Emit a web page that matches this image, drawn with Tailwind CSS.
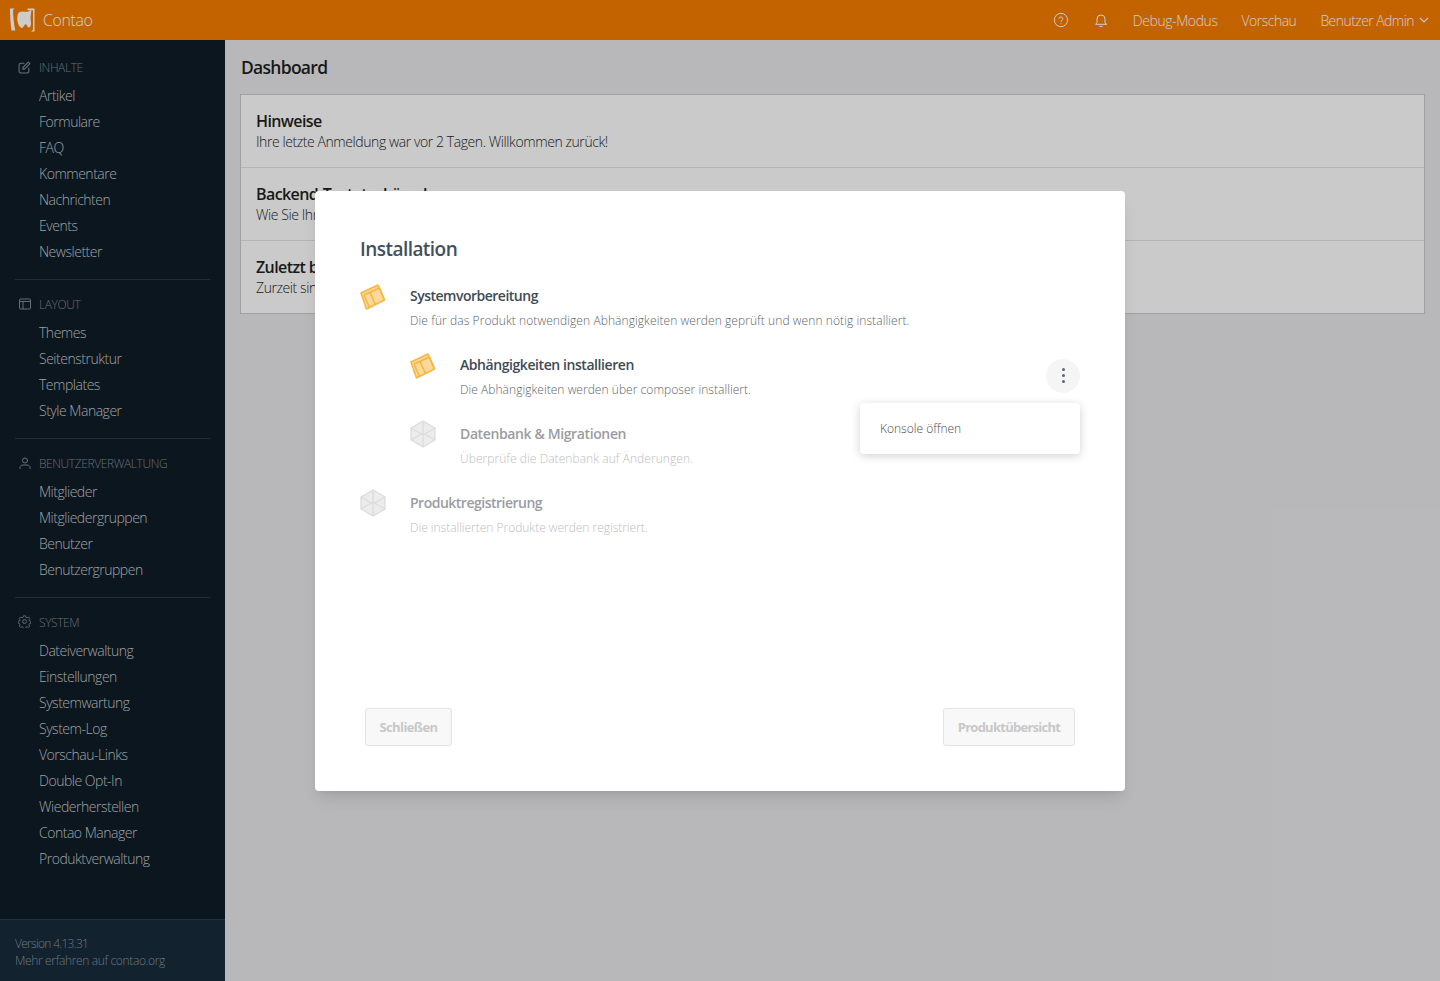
<!DOCTYPE html>
<html lang="de">
<head>
<meta charset="utf-8">
<title>Contao Dashboard</title>
<script src="https://cdn.jsdelivr.net/npm/@tailwindcss/browser@4"></script>
</head>
<body class="font-['Open_Sans','Noto_Sans',sans-serif] overflow-hidden">
<div class="relative h-[981px] w-[1440px] overflow-hidden bg-[#e7e7ea] flex flex-col">
  <header class="h-10 shrink-0 bg-[#f47c00] text-white flex items-center justify-between pl-[10px] pr-[11px]">
    <div class="flex items-center gap-[8px]">
      <svg width="25" height="24" viewBox="0 0 25 24" fill="#fff">
        <path d="M0 0.500H4.800L3 1.800C3.200 8 3.600 15 5.300 22.500H1.500C0.500 16 0 8 0 0.500Z"/>
        <path d="M9.500 4C12 2.800 14 3.800 16 3.800C18 3.800 20 3 21.500 1.500C21 6 20.200 9 20.700 12C21 14.500 21.500 17 20 19C18.600 20.300 17.500 19 17 17.500C16.400 16.200 15.500 16 14.600 17C13.600 18.300 12.500 20.500 11 19.800C9 18.500 7.500 15 7.300 11.500C7.100 8.500 7.600 5.300 9.500 4Z"/>
        <path d="M17.500 0.500H24.500V23.500H20.800L23 22V2.200H17.500Z"/>
      </svg>
      <span class="text-[16px] font-light tracking-[-0.4px]">Contao</span>
    </div>
    <nav class="flex items-center text-[14px] font-light tracking-[-0.42px]">
      <svg width="16" height="16" viewBox="0 0 24 24" fill="none" stroke="currentColor" stroke-width="1.500" stroke-linecap="round" stroke-linejoin="round" class="mr-[24px]"><circle cx="12" cy="12" r="10"/><path d="M9.200 9.400a2.800 2.800 0 0 1 5.500.8c0 1.800-2.700 2.400-2.700 4"/><path d="M12 17.400h.01"/></svg>
      <svg width="16" height="16" viewBox="0 0 24 24" fill="none" stroke="currentColor" stroke-width="1.500" stroke-linecap="round" stroke-linejoin="round" class="mr-[24px]"><path d="M18 16V10.500a6 6 0 0 0-12 0V16l-2 2.500h16Z"/><path d="M10 21.500h4"/></svg>
      <span class="mr-[24px]">Debug-Modus</span>
      <span class="mr-[24px] tracking-[-0.5px]">Vorschau</span>
      <span class="tracking-[-0.56px]">Benutzer Admin</span>
      <svg width="10" height="10" viewBox="0 0 10 10" fill="none" stroke="currentColor" stroke-width="1.100" class="ml-[5px]"><path d="M1 3l4 4 4-4"/></svg>
    </nav>
  </header>
  <div class="flex flex-1 min-h-0">
    <aside class="w-[225px] shrink-0 bg-[#0f1c26] flex flex-col text-[14px] font-light text-[#c4cbd1] tracking-[-0.48px]">
      <nav class="flex-1 pt-3">
        <section>
          <div class="h-[30px] pt-[2px] flex items-center pl-[18px] text-[12px] text-[#808b95] uppercase tracking-[-0.4px]">
            <svg width="13" height="13" viewBox="0 0 24 24" fill="none" stroke="#808b95" stroke-width="2" stroke-linecap="round" stroke-linejoin="round" class="mr-[8px] -mt-[2px]"><path d="M20 13v6a3 3 0 0 1-3 3H5a3 3 0 0 1-3-3V7a3 3 0 0 1 3-3h6"/><path d="M9 12l10-10 3 3-10 10H9Z"/></svg>
            Inhalte</div>
          <ul class="pl-[39px]">
            <li class="h-[26px] leading-[27px]">Artikel</li>
            <li class="h-[26px] leading-[27px]">Formulare</li>
            <li class="h-[26px] leading-[27px]">FAQ</li>
            <li class="h-[26px] leading-[27px]">Kommentare</li>
            <li class="h-[26px] leading-[27px]">Nachrichten</li>
            <li class="h-[26px] leading-[27px]">Events</li>
            <li class="h-[26px] leading-[27px]">Newsletter</li>
          </ul>
        </section>
        <div class="h-px bg-[#2c3943] mx-[15px] mt-[15px] mb-[9px]"></div>
        <section>
          <div class="h-[30px] pt-[2px] flex items-center pl-[19px] text-[12px] text-[#808b95] uppercase tracking-[-0.4px]">
            <svg width="12" height="12" viewBox="0 0 12 12" fill="none" stroke="#808b95" stroke-width="1" class="mr-[8px] -mt-[2px]"><rect x="0.500" y="1" width="11" height="10" rx="1"/><path d="M0.500 3.500H11.500M4 3.500V11"/></svg>
            Layout</div>
          <ul class="pl-[39px]">
            <li class="h-[26px] leading-[27px]">Themes</li>
            <li class="h-[26px] leading-[27px]">Seitenstruktur</li>
            <li class="h-[26px] leading-[27px]">Templates</li>
            <li class="h-[26px] leading-[27px]">Style Manager</li>
          </ul>
        </section>
        <div class="h-px bg-[#2c3943] mx-[15px] mt-[15px] mb-[9px]"></div>
        <section>
          <div class="h-[30px] pt-[2px] flex items-center pl-[19px] text-[12px] text-[#808b95] uppercase tracking-[-0.4px]">
            <svg width="12" height="12" viewBox="0 0 12 12" fill="none" stroke="#808b95" stroke-width="1" stroke-linecap="round" class="mr-[8px] -mt-[3px]"><circle cx="6" cy="3.500" r="2.500"/><path d="M1 11.500V10.500C1 9 2.500 8 4 8H8C9.500 8 11 9 11 10.500V11.500"/></svg>
            Benutzerverwaltung</div>
          <ul class="pl-[39px]">
            <li class="h-[26px] leading-[27px]">Mitglieder</li>
            <li class="h-[26px] leading-[27px]">Mitgliedergruppen</li>
            <li class="h-[26px] leading-[27px]">Benutzer</li>
            <li class="h-[26px] leading-[27px]">Benutzergruppen</li>
          </ul>
        </section>
        <div class="h-px bg-[#2c3943] mx-[15px] mt-[15px] mb-[9px]"></div>
        <section>
          <div class="h-[30px] pt-[2px] flex items-center pl-[18px] text-[12px] text-[#808b95] uppercase tracking-[-0.4px]">
            <svg width="13" height="13" viewBox="0 0 24 24" fill="none" stroke="#808b95" stroke-width="1.800" stroke-linejoin="round" class="mr-[8px] -mt-[3px]"><path d="M10 1h4l.8 3.200 2.600 1.100 2.800-1.700 2.800 2.800-1.700 2.800 1.100 2.600 3.200.8v4l-3.200.8-1.100 2.600 1.700 2.800-2.800 2.800-2.800-1.700-2.600 1.100-.8 3.200h-4l-.8-3.200-2.600-1.100-2.800 1.700-2.800-2.800 1.700-2.800-1.100-2.600-3.200-.8v-4l3.200-.8 1.100-2.600-1.700-2.800 2.800-2.800 2.800 1.700 2.600-1.100Z" transform="translate(12 12) scale(.88) translate(-12 -13)"/><circle cx="12" cy="12" r="3.500"/></svg>
            System</div>
          <ul class="pl-[39px]">
            <li class="h-[26px] leading-[27px]">Dateiverwaltung</li>
            <li class="h-[26px] leading-[27px]">Einstellungen</li>
            <li class="h-[26px] leading-[27px]">Systemwartung</li>
            <li class="h-[26px] leading-[27px]">System-Log</li>
            <li class="h-[26px] leading-[27px]">Vorschau-Links</li>
            <li class="h-[26px] leading-[27px]">Double Opt-In</li>
            <li class="h-[26px] leading-[27px]">Wiederherstellen</li>
            <li class="h-[26px] leading-[27px]">Contao Manager</li>
            <li class="h-[26px] leading-[27px]">Produktverwaltung</li>
          </ul>
        </section>
      </nav>
      <footer class="h-[62px] shrink-0 border-t border-[#2c3e4d] bg-[#172b3b] pl-[15px] pt-[15px] text-[12px] leading-[17px] text-[#8b96a0] tracking-[-0.35px]">
        <p class="tracking-[-0.7px]">Version 4.13.31</p>
        <p>Mehr erfahren auf contao.org</p>
      </footer>
    </aside>
    <main class="flex-1 pl-[15px] pr-[15px] text-[#1f1f1f]">
      <h1 class="text-[17.5px] font-semibold leading-[24px] mt-[15px] mb-[15px] pl-[1px] tracking-[-0.72px]">Dashboard</h1>
      <div class="border border-[#c9c9cc] bg-[#fdfdfd]">
        <section class="h-[73px] border-b border-[#e2e2e4] px-[15px] pt-[14px]">
          <h2 class="text-[16px] font-semibold leading-[24px] tracking-[-0.6px]">Hinweise</h2>
          <p class="text-[14px] font-light leading-[18px] tracking-[-0.42px]">Ihre letzte Anmeldung war vor 2 Tagen. Willkommen zurück!</p>
        </section>
        <section class="h-[73px] border-b border-[#e2e2e4] px-[15px] pt-[14px]">
          <h2 class="text-[16px] font-semibold leading-[24px] tracking-[-0.6px]">Backend-Tastaturkürzel</h2>
          <p class="text-[14px] font-light leading-[18px] tracking-[-0.42px]">Wie Sie Ihre Arbeit beschleunigen können</p>
        </section>
        <section class="h-[72px] px-[15px] pt-[14px]">
          <h2 class="text-[16px] font-semibold leading-[24px] tracking-[-0.6px]">Zuletzt bearbeitet</h2>
          <p class="text-[14px] font-light leading-[18px] tracking-[-0.42px]">Zurzeit sind keine Einträge vorhanden.</p>
        </section>
      </div>
    </main>
  </div>

  <div class="absolute inset-0 bg-black/20 flex items-center justify-center">
    <div class="relative w-[810px] h-[600px] bg-white rounded-[4px] shadow-lg flex flex-col pt-[44px] text-[#3e4a54]">
      <h2 class="mx-[45px] text-[19px] font-semibold leading-[28px] text-[#43505a] mb-[23px] tracking-[-0.55px]">Installation</h2>

      <div class="mx-[45px] h-[69px] flex">
        <div class="w-[50px] shrink-0">
          <svg width="26" height="26" viewBox="0 0 26 26" class="-mt-[2px]" stroke="#f6b53f" stroke-width="1.500" stroke-linejoin="round" fill="#fbd99a"><path d="M1 9L18 1L24.500 16L6.500 25Z"/><path fill="none" d="M4 11L19.500 4M4 11L9.500 23.500M10 8.500L15.500 20.500M19.500 4L24.500 16"/></svg>
        </div>
        <div>
          <h3 class="text-[14px] font-semibold leading-[20px] tracking-[-0.5px]">Systemvorbereitung</h3>
          <p class="mt-[6px] text-[12px] font-light leading-[18px] text-[#5b646c] tracking-[0.08px]">Die für das Produkt notwendigen Abhängigkeiten werden geprüft und wenn nötig installiert.</p>
        </div>
      </div>

      <div class="relative ml-[95px] mr-[45px] h-[69px] flex">
        <div class="w-[50px] shrink-0">
          <svg width="26" height="26" viewBox="0 0 26 26" class="-mt-[2px]" stroke="#f6b53f" stroke-width="1.500" stroke-linejoin="round" fill="#fbd99a"><path d="M1 9L18 1L24.500 16L6.500 25Z"/><path fill="none" d="M4 11L19.500 4M4 11L9.500 23.500M10 8.500L15.500 20.500M19.500 4L24.500 16"/></svg>
        </div>
        <div>
          <h3 class="text-[14px] font-semibold leading-[20px] tracking-[-0.43px]">Abhängigkeiten installieren</h3>
          <p class="mt-[6px] text-[12px] font-light leading-[18px] text-[#5b646c] tracking-[0.04px]">Die Abhängigkeiten werden über composer installiert.</p>
        </div>
        <button class="ml-auto mt-[4px] w-[34px] h-[34px] rounded-full bg-[#f5f5f6] flex flex-col items-center justify-center gap-[3px]">
          <span class="w-[3px] h-[3px] rounded-full bg-[#5c6470]"></span>
          <span class="w-[3px] h-[3px] rounded-full bg-[#5c6470]"></span>
          <span class="w-[3px] h-[3px] rounded-full bg-[#5c6470]"></span>
        </button>
        <div class="absolute z-10 right-0 top-[48px] w-[220px] h-[51px] pt-[2px] bg-white rounded-[4px] shadow-[0_2px_10px_rgba(0,0,0,0.18)] pl-[20px] flex items-center text-[12px] font-light text-[#4a4a4a]">Konsole öffnen</div>
      </div>

      <div class="ml-[95px] mr-[45px] h-[69px] flex">
        <div class="w-[50px] shrink-0">
          <svg width="26" height="28" viewBox="0 0 26 28" class="-mt-[4px]" stroke="#dcdcdc" stroke-width="1.300" stroke-linejoin="round" fill="#ececec"><path d="M13 1L25 8V20L13 27L1 20V8Z"/><path fill="none" d="M1 8L13 15L25 8M1 20L13 13L25 20M13 1V13M13 15V27"/></svg>
        </div>
        <div>
          <h3 class="text-[14px] font-semibold leading-[20px] text-[#9b9ca1] tracking-[-0.38px]">Datenbank &amp; Migrationen</h3>
          <p class="mt-[6px] text-[12px] font-light leading-[18px] text-[#bcbcc0] tracking-[0.06px]">Überprüfe die Datenbank auf Änderungen.</p>
        </div>
      </div>

      <div class="mx-[45px] h-[69px] flex">
        <div class="w-[50px] shrink-0">
          <svg width="26" height="28" viewBox="0 0 26 28" class="-mt-[4px]" stroke="#dcdcdc" stroke-width="1.300" stroke-linejoin="round" fill="#ececec"><path d="M13 1L25 8V20L13 27L1 20V8Z"/><path fill="none" d="M1 8L13 15L25 8M1 20L13 13L25 20M13 1V13M13 15V27"/></svg>
        </div>
        <div>
          <h3 class="text-[14px] font-semibold leading-[20px] text-[#9b9ca1] tracking-[-0.5px]">Produktregistrierung</h3>
          <p class="mt-[6px] text-[12px] font-light leading-[18px] text-[#bcbcc0] tracking-[-0.02px]">Die installierten Produkte werden registriert.</p>
        </div>
      </div>

      <div class="mt-auto mx-[50px] mb-[45px] flex justify-between">
        <button class="h-[38px] w-[87px] pt-[2px] rounded-[3px] border border-[#e3e3e3] bg-[#f8f8f8] text-[13px] font-bold text-[#c8c8c8] tracking-[-0.6px]">Schließen</button>
        <button class="h-[38px] w-[132px] pt-[2px] rounded-[3px] border border-[#e3e3e3] bg-[#f8f8f8] text-[13px] font-bold text-[#c8c8c8] tracking-[-0.73px]">Produktübersicht</button>
      </div>
    </div>
  </div>
</div>
</body>
</html>
